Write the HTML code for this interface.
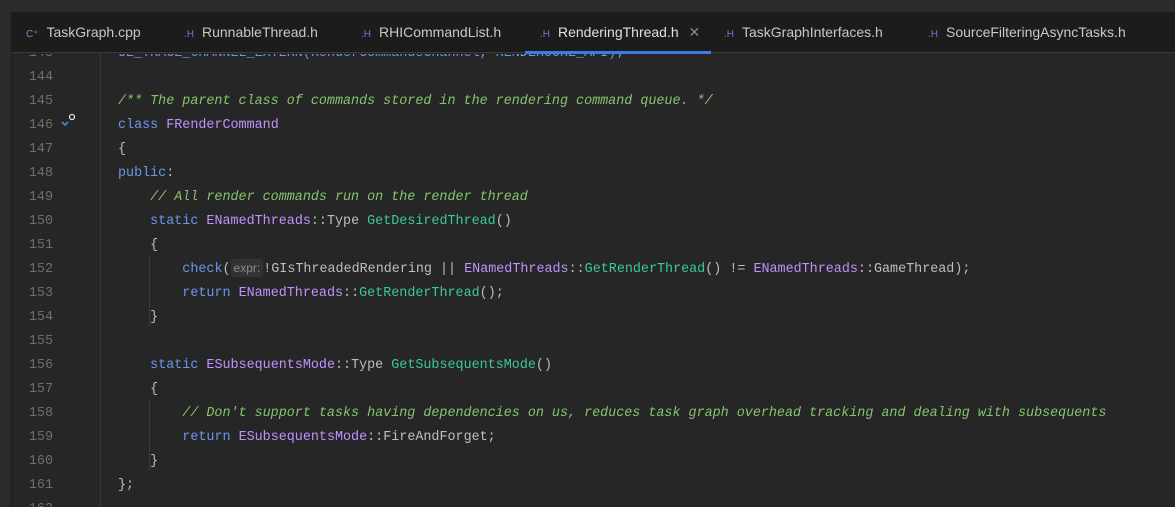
<!DOCTYPE html>
<html><head><meta charset="utf-8"><style>
body{margin:0;width:1175px;height:507px;overflow:hidden;background:#262626;font-family:"Liberation Sans",sans-serif;position:relative}
.top{position:absolute;left:0;top:0;width:1175px;height:12px;background:#2b2b2d}
.side{position:absolute;left:0;top:12px;width:11px;height:495px;background:#2b2b2b;border-right:1px solid #1e1e1e}
.tabs{position:absolute;left:12px;top:12px;width:1163px;height:41px;background:#1c1c1c;border-bottom:1px solid #393939;box-sizing:border-box}
.tab{position:absolute;top:0;height:41px;line-height:41px;font-size:14px;color:#c8c8c8;white-space:nowrap}
.tab i{font-style:normal;color:#8f63d6;font-size:10px;margin-right:8px}
.act{position:absolute;left:525px;top:51px;width:186px;height:3px;background:#3d7ce0}
.gl{position:absolute;left:100px;top:53px;width:1px;height:454px;background:#353535}
.ln,.cd{position:absolute;font-family:"Liberation Mono",monospace;font-size:13.4px;white-space:pre;line-height:24px}
.ln{left:0;width:53px;text-align:right;color:#6e6e6e}
.cd{left:118px;color:#bcbec4}
.k{color:#6c95eb}.c{color:#c191ff}.f{color:#39cc8f}.m{color:#85c46c;font-style:italic}
.h{display:inline-block;background:#333;color:#8a8a8a;border-radius:3px;font-family:"Liberation Sans",sans-serif;font-size:12px;line-height:18px;padding:0 3px}
.ig{position:absolute;width:1px;background:#3a3a3a}
</style></head><body>
<div class="top"></div><div class="side"></div>
<div class="tabs">
<div class="tab" style="left:14px"><i style="color:#8f7fd0">C⁺</i>TaskGraph.cpp</div>
<div class="tab" style="left:172px"><i>.H</i>RunnableThread.h</div>
<div class="tab" style="left:349px"><i>.H</i>RHICommandList.h</div>
<div class="tab" style="left:528px;color:#e0e0e0"><i>.H</i>RenderingThread.h <span style="color:#888;margin-left:6px">✕</span></div>
<div class="tab" style="left:712px"><i>.H</i>TaskGraphInterfaces.h</div>
<div class="tab" style="left:916px"><i>.H</i>SourceFilteringAsyncTasks.h</div>
</div>
<div class="act"></div>
<div class="gl"></div>
<div class="ig" style="left:149px;top:254px;height:72px"></div>
<div class="ig" style="left:149px;top:398px;height:72px"></div>
<div style="position:absolute;left:0;top:54px;width:1175px;height:453px;overflow:hidden">
<div style="position:relative;top:-36px">
<div class="ln" style="top:24px">143</div><div class="cd k" style="top:24px">UE_TRACE_CHANNEL_EXTERN(RenderCommandsChannel, RENDERCORE_API);</div>
<div class="ln" style="top:48px">144</div>
<div class="ln" style="top:72px">145</div><div class="cd m" style="top:72px">/** The parent class of commands stored in the rendering command queue. */</div>
<div class="ln" style="top:96px">146</div><div class="cd" style="top:96px"><span class="k">class</span> <span class="c">FRenderCommand</span></div>
<div class="ln" style="top:120px">147</div><div class="cd" style="top:120px">{</div>
<div class="ln" style="top:144px">148</div><div class="cd" style="top:144px"><span class="k">public</span>:</div>
<div class="ln" style="top:168px">149</div><div class="cd m" style="top:168px">    // All render commands run on the render thread</div>
<div class="ln" style="top:192px">150</div><div class="cd" style="top:192px">    <span class="k">static</span> <span class="c">ENamedThreads</span>::Type <span class="f">GetDesiredThread</span>()</div>
<div class="ln" style="top:216px">151</div><div class="cd" style="top:216px">    {</div>
<div class="ln" style="top:240px">152</div><div class="cd" style="top:240px">        <span class="k">check</span>(<span class="h">expr:</span>!GIsThreadedRendering || <span class="c">ENamedThreads</span>::<span class="f">GetRenderThread</span>() != <span class="c">ENamedThreads</span>::GameThread);</div>
<div class="ln" style="top:264px">153</div><div class="cd" style="top:264px">        <span class="k">return</span> <span class="c">ENamedThreads</span>::<span class="f">GetRenderThread</span>();</div>
<div class="ln" style="top:288px">154</div><div class="cd" style="top:288px">    }</div>
<div class="ln" style="top:312px">155</div>
<div class="ln" style="top:336px">156</div><div class="cd" style="top:336px">    <span class="k">static</span> <span class="c">ESubsequentsMode</span>::Type <span class="f">GetSubsequentsMode</span>()</div>
<div class="ln" style="top:360px">157</div><div class="cd" style="top:360px">    {</div>
<div class="ln" style="top:384px">158</div><div class="cd m" style="top:384px">        // Don't support tasks having dependencies on us, reduces task graph overhead tracking and dealing with subsequents</div>
<div class="ln" style="top:408px">159</div><div class="cd" style="top:408px">        <span class="k">return</span> <span class="c">ESubsequentsMode</span>::FireAndForget;</div>
<div class="ln" style="top:432px">160</div><div class="cd" style="top:432px">    }</div>
<div class="ln" style="top:456px">161</div><div class="cd" style="top:456px">};</div>
<div class="ln" style="top:480px">162</div>
</div></div>
<svg style="position:absolute;left:60px;top:113px" width="18" height="18"><circle cx="12" cy="4" r="2.5" fill="none" stroke="#ddd" stroke-width="1.3"/><path d="M2 9l3 3 3-3" fill="none" stroke="#3f8fd6" stroke-width="1.6"/></svg>
</body></html>
